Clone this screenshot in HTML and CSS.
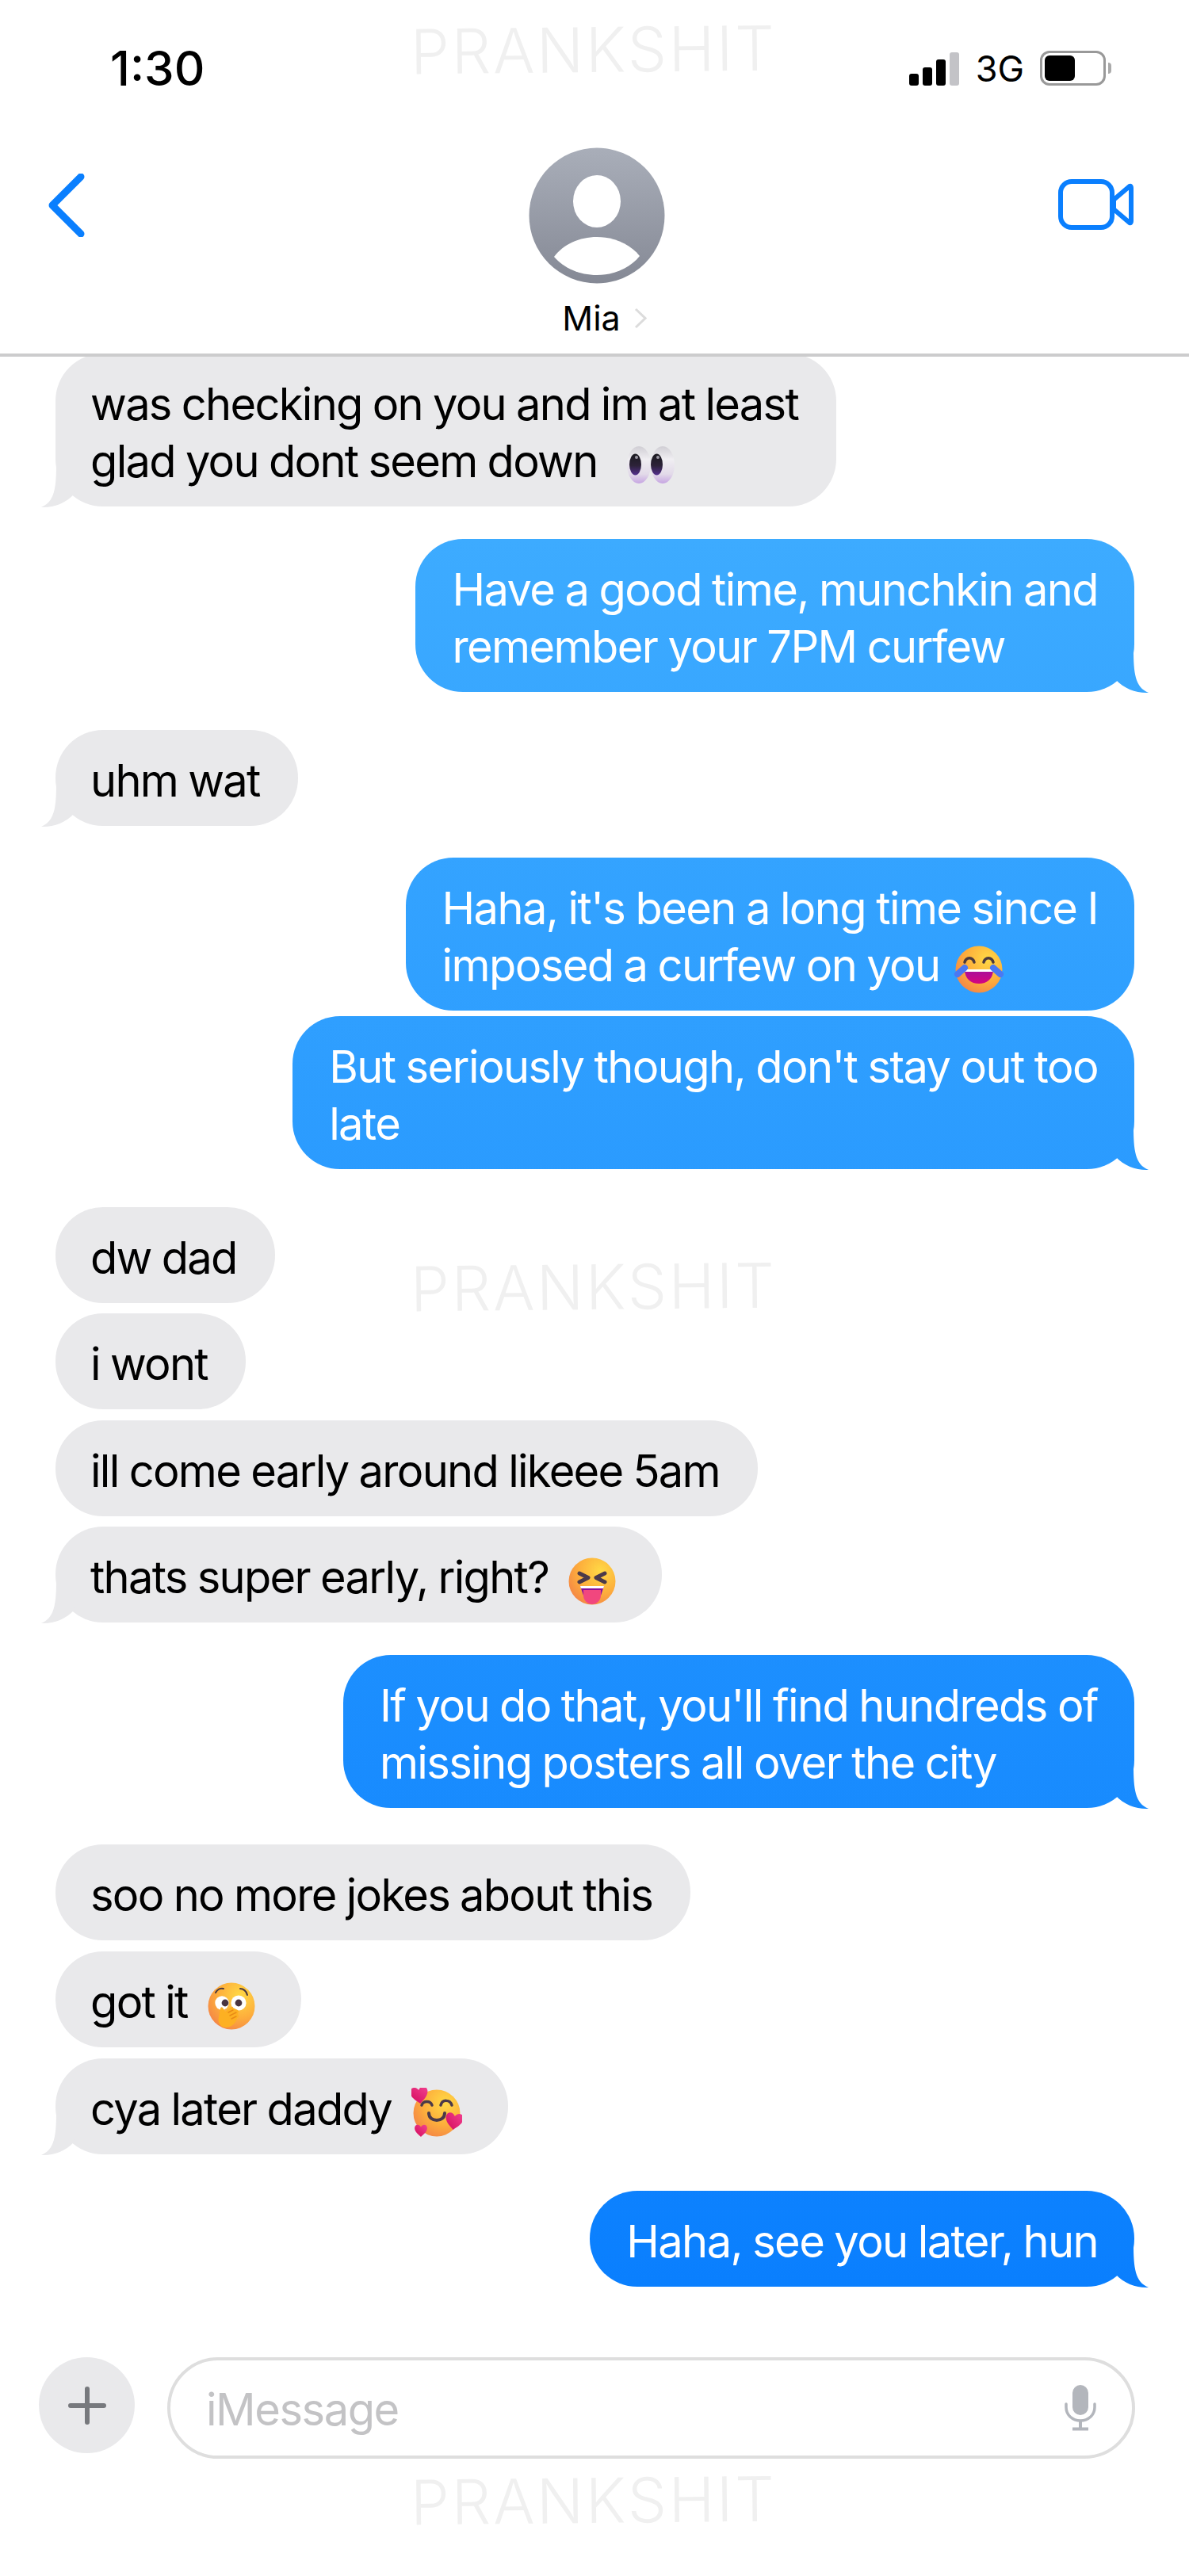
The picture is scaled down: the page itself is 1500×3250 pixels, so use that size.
FILE: index.html
```html
<!DOCTYPE html>
<html lang="en">
<head>
    <meta charset="UTF-8">
    <title>Mia</title>
    <link rel="stylesheet" href="styles.css">
</head>
<body>
    <svg class="defs" width="0" height="0">
        <defs>
            <radialGradient id="faceFill" cx="0.68" cy="0.28" r="0.85">
                <stop offset="0" stop-color="#ffd945"/>
                <stop offset="0.55" stop-color="#fdae3c"/>
                <stop offset="0.9" stop-color="#f58a45"/>
                <stop offset="1" stop-color="#f27a70"/>
            </radialGradient>
            <linearGradient id="eyeFill" x1="0" y1="0" x2="0" y2="1">
                <stop offset="0" stop-color="#d0ced4"/>
                <stop offset="0.35" stop-color="#f0eef2"/>
                <stop offset="0.75" stop-color="#e2dae9"/>
                <stop offset="1" stop-color="#c6a5e2"/>
            </linearGradient>
            <linearGradient id="pupilFill" x1="0" y1="0" x2="0" y2="1">
                <stop offset="0" stop-color="#1b1a20"/>
                <stop offset="0.55" stop-color="#2c2238"/>
                <stop offset="1" stop-color="#55308f"/>
            </linearGradient>
            <linearGradient id="heartFill" x1="1" y1="0" x2="0" y2="1">
                <stop offset="0" stop-color="#f2418f"/>
                <stop offset="1" stop-color="#d30a5c"/>
            </linearGradient>
            <linearGradient id="mouthFill" x1="0" y1="0" x2="0" y2="1">
                <stop offset="0" stop-color="#a4109d"/>
                <stop offset="1" stop-color="#d5047f"/>
            </linearGradient>
            <linearGradient id="avatarFill" x1="0" y1="0" x2="0" y2="1">
                <stop offset="0" stop-color="#a9aeb9"/>
                <stop offset="1" stop-color="#858995"/>
            </linearGradient>
        </defs>
    </svg>

    <div class="watermark watermark-top">PRANKSHIT</div>
    <div class="watermark watermark-mid">PRANKSHIT</div>
    <div class="watermark watermark-bottom">PRANKSHIT</div>

    <header class="top">
        <div class="status">
            <span class="time">1:30</span>
            <div class="status-right">
                <div class="signal">
                    <span class="bar bar-1"></span>
                    <span class="bar bar-2"></span>
                    <span class="bar bar-3"></span>
                    <span class="bar bar-4"></span>
                </div>
                <span class="network">3G</span>
                <div class="battery"><span class="battery-level"></span></div>
                <span class="battery-nub"></span>
            </div>
        </div>
        <nav class="nav">
            <svg class="back" width="46" height="80" viewBox="0 0 46 80">
                <path d="M41 4 L5 40 L41 76" fill="none" stroke="#0a7ffe" stroke-width="9" stroke-linecap="round" stroke-linejoin="round"/>
            </svg>
            <div class="contact">
                <svg class="avatar" width="172" height="172" viewBox="0 0 172 172">
                    <circle cx="86" cy="86" r="85.5" fill="url(#avatarFill)"/>
                    <ellipse cx="86" cy="68" rx="30" ry="33" fill="#fff"/>
                    <path d="M32 138 C44 122 64 113 86 113 C108 113 128 122 140 137 C128 152 108 161 86 161 C64 161 44 152 32 138 Z" fill="#fff"/>
                </svg>
                <div class="contact-name">
                    <span>Mia</span>
                    <svg width="16" height="27" viewBox="0 0 16 27">
                        <path d="M2 2 L14 13.5 L2 25" fill="none" stroke="#dcdcdc" stroke-width="3"/>
                    </svg>
                </div>
            </div>
            <svg class="camera" width="96" height="64" viewBox="0 0 96 64">
                <rect x="3" y="3" width="65" height="58" rx="14" fill="none" stroke="#0a7ffe" stroke-width="6"/>
                <path d="M70 26 L90 9 Q92 8 92 11 V53 Q92 56 90 55 L70 38 Z" fill="none" stroke="#0a7ffe" stroke-width="6" stroke-linejoin="round"/>
            </svg>
        </nav>
    </header>

    <main class="messages">
        <div class="bubble in">was checking on you and im at least<br>glad you dont seem down
            <svg class="emoji emoji-eyes" width="60" height="47" viewBox="0 0 60 47">
                <ellipse cx="45" cy="23.5" rx="15" ry="23.5" fill="url(#eyeFill)"/>
                <ellipse cx="15" cy="23.5" rx="15" ry="23.5" fill="url(#eyeFill)"/>
                <ellipse cx="10.5" cy="23" rx="7.5" ry="13.5" fill="url(#pupilFill)"/>
                <ellipse cx="37.5" cy="23" rx="7.5" ry="13.5" fill="url(#pupilFill)"/>
                <circle cx="12" cy="14" r="2" fill="#9b98a3"/>
                <circle cx="39" cy="14" r="2" fill="#9b98a3"/>
            </svg>
        </div>

        <div class="bubble out gap-41">Have a good time, munchkin and<br>remember your 7PM curfew</div>

        <div class="bubble in gap-48">uhm wat</div>

        <div class="bubble out gap-40 no-tail">Haha, it's been a long time since I<br>imposed a curfew on you
            <svg class="emoji" width="64" height="60" viewBox="0 0 64 60">
                <circle cx="32" cy="30" r="29.5" fill="url(#faceFill)"/>
                <path d="M14 21 C16 14 24 14 26 21 M38 21 C40 14 48 14 50 21" fill="none" stroke="#4b3a3e" stroke-width="3.5" stroke-linecap="round"/>
                <path d="M14 30 H50 C50 42 42 48 32 48 C22 48 14 42 14 30 Z" fill="url(#mouthFill)"/>
                <path d="M14 30 H50 L49.5 33 H14.5 Z" fill="#fff"/>
                <path d="M5 36 L14 28 M50 28 L59 36" stroke="#4b78f2" stroke-width="8" stroke-linecap="round"/>
            </svg>
        </div>
        <div class="bubble out gap-7">But seriously though, don't stay out too<br>late</div>

        <div class="bubble in gap-48 no-tail">dw dad</div>
        <div class="bubble in gap-13 no-tail">i wont</div>
        <div class="bubble in gap-14 no-tail">ill come early around likeee 5am</div>
        <div class="bubble in gap-13">thats super early, right?
            <svg class="emoji" width="60" height="60" viewBox="0 0 60 60">
                <circle cx="30" cy="30" r="29.5" fill="url(#faceFill)"/>
                <path d="M14 20 L25 25.5 L14 31 M46 20 L35 25.5 L46 31" fill="none" stroke="#4b3a4a" stroke-width="5" stroke-linecap="round" stroke-linejoin="round"/>
                <path d="M15 36 H45 L41 48 H19 Z" fill="#8a109a"/>
                <path d="M15 36 H45 L44.2 39 H15.8 Z" fill="#fff"/>
                <path d="M19 41 H41 V48 C41 54 36 59 30 59 C24 59 19 54 19 48 Z" fill="#f1477e"/>
            </svg>
        </div>

        <div class="bubble out gap-41">If you do that, you'll find hundreds of<br>missing posters all over the city</div>

        <div class="bubble in gap-46 no-tail">soo no more jokes about this</div>
        <div class="bubble in gap-14 no-tail">got it
            <svg class="emoji" width="60" height="60" viewBox="0 0 60 60">
                <circle cx="30" cy="30" r="29.5" fill="url(#faceFill)"/>
                <circle cx="18" cy="26" r="8.7" fill="#fff"/>
                <circle cx="39" cy="26" r="9.6" fill="#fff"/>
                <circle cx="22" cy="26" r="4.4" fill="#4a3540"/>
                <circle cx="39" cy="26" r="4.4" fill="#4a3540"/>
                <path d="M10 13 C12 9 16 7 20 8 M41 8 C45 8 49 11 50 16" fill="none" stroke="#4b3a3e" stroke-width="2" stroke-linecap="round"/>
                <path d="M16 33 Q17 30 19 32 L22 37 L30 31 Q32 30 32 32 L38 35 Q40 37 38 39 L39 42 Q39 45 37 45 C36 51 30 57 23 57 C16 57 12 50 14 44 Z" fill="#fdb022"/>
                <path d="M26 38 L32 35 M28 42 L36 38 M30 46 L36 43" fill="none" stroke="#e98a16" stroke-width="1.4" stroke-linecap="round"/>
            </svg>
        </div>
        <div class="bubble in gap-14">cya later daddy
            <svg class="emoji" width="64" height="64" viewBox="0 0 64 64">
                <circle cx="32" cy="32" r="29.5" fill="url(#faceFill)"/>
                <path d="M13 22 C15 16 24 16 26 22 M37 22 C39 14 49 15 51 22" fill="none" stroke="#4b3a4a" stroke-width="3.5" stroke-linecap="round"/>
                <path d="M22 32 C22 44 42 44 42 32" fill="none" stroke="#4b3a4a" stroke-width="4" stroke-linecap="round"/>
                <path transform="translate(10 9) rotate(-8)" d="M0 -6 C-3 -12 -11 -11 -11 -4 C-11 3 -3 8 0 11 C3 8 11 3 11 -4 C11 -11 3 -12 0 -6 Z" fill="url(#heartFill)"/>
                <path transform="translate(54 42) rotate(8)" d="M0 -6 C-3 -12 -11 -11 -11 -4 C-11 3 -3 8 0 11 C3 8 11 3 11 -4 C11 -11 3 -12 0 -6 Z" fill="url(#heartFill)"/>
                <path transform="translate(12 54) scale(0.72)" d="M0 -6 C-3 -12 -11 -11 -11 -4 C-11 3 -3 8 0 11 C3 8 11 3 11 -4 C11 -11 3 -12 0 -6 Z" fill="url(#heartFill)"/>
            </svg>
        </div>

        <div class="bubble out gap-46">Haha, see you later, hun</div>
    </main>

    <footer class="composer">
        <div class="plus">
            <svg width="48" height="48" viewBox="0 0 48 48">
                <path d="M24 3 V45 M3 24 H45" stroke="#77797d" stroke-width="6" stroke-linecap="round"/>
            </svg>
        </div>
        <div class="field">
            <span class="placeholder">iMessage</span>
            <svg width="42" height="58" viewBox="0 0 42 58">
                <rect x="11" y="0" width="20" height="38" rx="10" fill="#b3b6bc"/>
                <path d="M3 24 V28 C3 38 11 45 21 45 C31 45 39 38 39 28 V24" fill="none" stroke="#b3b6bc" stroke-width="3.5" stroke-linecap="round"/>
                <path d="M21 45 V54 M11 55.5 H31" fill="none" stroke="#b3b6bc" stroke-width="4"/>
            </svg>
        </div>
    </footer>
</body>
</html>
```

FILE: styles.css
```css
:root {
    --blue: #0a7ffe;
    --gray-bubble: #e9e9eb;
}

html, body {
    margin: 0;
    padding: 0;
}
body {
    width: 1500px;
    height: 3250px;
    overflow: hidden;
    position: relative;
    background-color: #fff;
    color: #000;
    font-family: Inter, "Liberation Sans", sans-serif;
}
.defs {
    position: absolute;
}

/* watermark sits on top of the screenshot */
.watermark {
    position: absolute;
    left: 518px;
    z-index: 5;
    font-size: 78px;
    font-weight: 300;
    line-height: 90px;
    letter-spacing: 2.7px;
    color: #f0f0f0;
    transform: rotate(-0.6deg);
}
.watermark-top { top: 18px; }
.watermark-mid { top: 1579px; }
.watermark-bottom { top: 3110px; }

.top {
    position: relative;
    z-index: 2;
    box-sizing: border-box;
    height: 450px;
    background-color: #fff;
    border-bottom: 4px solid #cccccd;
}
.status {
    display: flex;
    justify-content: space-between;
    align-items: center;
    height: 72px;
    padding: 50px 98px 0 139px;
}
.time {
    font-size: 60px;
    font-weight: 500;
    letter-spacing: 0;
}
.status-right {
    display: flex;
    align-items: center;
}
.signal {
    display: flex;
    align-items: flex-end;
    gap: 5px;
    height: 44px;
}
.bar {
    width: 12px;
    border-radius: 3px;
    background-color: #000;
}
.bar-1 { height: 15px; }
.bar-2 { height: 23px; }
.bar-3 { height: 33px; }
.bar-4 { height: 42px; background-color: #c3c3c7; }
.network {
    margin-left: 21px;
    font-size: 45px;
    letter-spacing: 0;
}
.battery {
    box-sizing: border-box;
    width: 83px;
    height: 44px;
    margin-left: 20px;
    padding: 3px;
    border: 3px solid #999;
    border-radius: 12px;
}
.battery-level {
    display: block;
    width: 38px;
    height: 100%;
    border-radius: 6px;
    background-color: #000;
}
.battery-nub {
    width: 4px;
    height: 14px;
    margin-left: 3px;
    border-radius: 0 4px 4px 0;
    background-color: #aaa;
}

.nav {
    display: grid;
    grid-template-columns: 1fr auto 1fr;
    align-items: start;
    padding: 64px 69px 0 61px;
}
.back {
    margin-top: 33px;
}
.camera {
    justify-self: end;
    margin-top: 40px;
}
.contact {
    display: flex;
    flex-direction: column;
    align-items: center;
    margin-left: 13px;
}
.contact-name {
    display: flex;
    align-items: center;
    gap: 17px;
    margin-top: 18px;
    padding-left: 20px;
    font-size: 43px;
    line-height: 50px;
}

.messages {
    display: flex;
    flex-direction: column;
    align-items: flex-start;
    margin-top: -4px;
    padding: 0 69px 0 70px;
}
.bubble {
    position: relative;
    padding: 28px 46px 21px;
    border-radius: 60px;
    font-size: 56px;
    line-height: 72px;
    letter-spacing: -1.7px;
    word-spacing: -1px;
    white-space: nowrap;
}
.in {
    padding-left: 44px;
    padding-right: 48px;
    background-color: var(--gray-bubble);
}
/* same page-long gradient for all the outgoing bubbles */
.out {
    align-self: flex-end;
    color: #fff;
    letter-spacing: -1.6px;
    background: linear-gradient(#3dabff 680px, #0a7ffe 2886px) fixed;
}
/* the tail, clipped out of a small box at the corner */
.bubble::after {
    content: "";
    position: absolute;
    bottom: -2px;
    width: 60px;
    height: 56px;
    background: inherit;
    clip-path: path("M40 0 C40 30 42 48 59 55 C45 56 28 50 18 39 L10 10 Z");
}
.out::after {
    right: -19px;
}
.in::after {
    left: -19px;
    transform: scaleX(-1);
}
.no-tail::after {
    display: none;
}
.gap-7 { margin-top: 7px; }
.gap-13 { margin-top: 13px; }
.gap-14 { margin-top: 14px; }
.gap-40 { margin-top: 40px; }
.gap-41 { margin-top: 41px; }
.gap-46 { margin-top: 46px; }
.gap-48 { margin-top: 48px; }

.emoji {
    margin: -10px 10px -10px 12px;
    vertical-align: middle;
}
.out .emoji {
    margin-left: 4px;
}
.in .emoji-eyes {
    margin-left: 24px;
}

.composer {
    display: flex;
    align-items: flex-start;
    gap: 41px;
    margin-top: 89px;
    padding: 0 68px 0 49px;
}
.plus {
    display: flex;
    flex: none;
    align-items: center;
    justify-content: center;
    width: 121px;
    height: 121px;
    border-radius: 50%;
    background-color: var(--gray-bubble);
}
.field {
    display: flex;
    flex: 1;
    align-items: center;
    justify-content: space-between;
    box-sizing: border-box;
    height: 128px;
    padding: 0 44px 0 45px;
    border: 4px solid #dedede;
    border-radius: 64px;
}
.placeholder {
    padding-top: 4px;
    font-size: 56px;
    letter-spacing: -1.45px;
    color: #c3c3c5;
}
```
